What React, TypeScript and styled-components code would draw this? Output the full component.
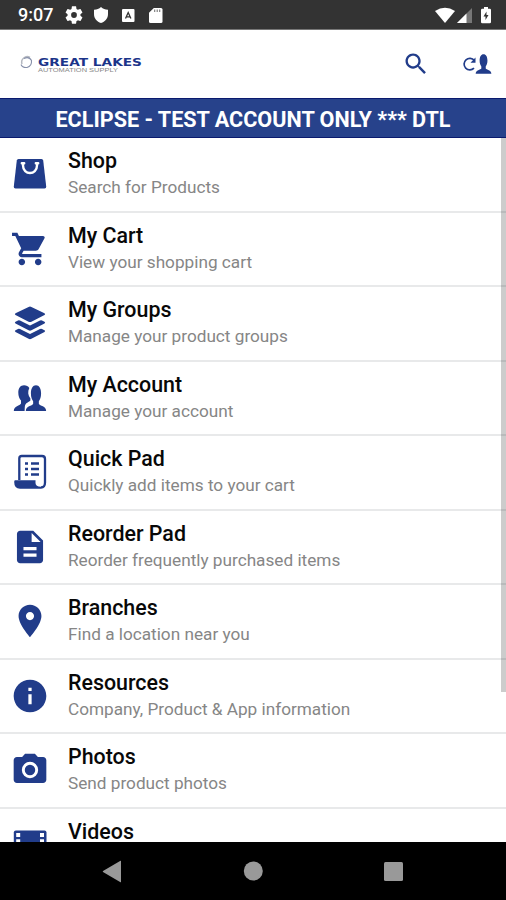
import React from 'react';
import styled, { createGlobalStyle } from 'styled-components';

const navy = '#213c8a';

const GlobalStyle = createGlobalStyle`
  * { box-sizing: border-box; }
  body { margin: 0; background: #fff; font-family: Roboto, "Liberation Sans", sans-serif; }
  svg { display: block; flex: none; }
`;

const Screen = styled.div`
  width: 506px;
  height: 900px;
  display: flex;
  flex-direction: column;
  overflow: hidden;
  background: #fff;
`;

const StatusBar = styled.div`
  height: 30px;
  flex: none;
  display: flex;
  align-items: center;
  justify-content: space-between;
  padding: 1px 15px 0 18px;
  background: #333;
  border-bottom: 1px solid #777;
  color: #fff;
`;

const StatusGroup = styled.div`
  display: flex;
  align-items: center;
`;

const Clock = styled.span`
  width: 47px;
  font-size: 18px;
  line-height: 20px;
  font-weight: 500;
  white-space: nowrap;
`;

const StatusSlot = styled.span<{ $width: number }>`
  width: ${(p) => p.$width}px;
  flex: none;
`;

const Header = styled.header`
  height: 68px;
  flex: none;
  display: flex;
  align-items: center;
  padding: 0 14px 0 19px;
`;

const Actions = styled.div`
  margin-left: auto;
  display: flex;
  align-items: center;
  gap: 32px;
`;

const Banner = styled.div`
  height: 40px;
  flex: none;
  display: flex;
  align-items: center;
  justify-content: center;
  padding-top: 2px;
  background: #27428b;
  border-top: 1px solid #0a1a6e;
  border-bottom: 1px solid #0a1a6e;
  color: #fff;
  font-size: 21.6px;
  font-weight: 700;
  white-space: nowrap;
`;

const ListArea = styled.main`
  position: relative;
  height: 704px;
  flex: none;
  overflow: hidden;
`;

const Row = styled.div`
  height: 74.5px;
  display: flex;
  align-items: center;
  padding-left: 10px;
  border-bottom: 2px solid #e8e9ea;
`;

const IconBox = styled.div`
  width: 58px;
  flex: none;
`;

const RowText = styled.div`
  display: flex;
  flex-direction: column;
  white-space: nowrap;
`;

const Title = styled.span`
  font-size: 21.4px;
  line-height: 26px;
  font-weight: 500;
  color: #080808;
`;

const Subtitle = styled.span`
  font-size: 17.2px;
  line-height: 26px;
  color: #868686;
`;

const ScrollThumb = styled.div`
  position: absolute;
  top: 0;
  right: 0;
  width: 5px;
  height: 554px;
  background: rgba(0, 0, 0, 0.2);
`;

const NavBar = styled.nav`
  height: 58px;
  flex: none;
  display: flex;
  justify-content: center;
  background: #000;
`;

const USER =
  'M17 0C22 0 25 3.500 25 9C25 13 23.500 15.500 21.500 17.500V20.500C23 22.500 33 22.500 33 28H1C1 22.500 11 22.500 12.500 20.500V17.500C10.500 15.500 9 13 9 9C9 3.500 12 0 17 0Z';

const Material = ({ d }: { d: string }) => (
  <svg width="40" height="40" viewBox="-.25 -.25 24.5 24.5" fill={navy}>
    <path fillRule="evenodd" d={d} />
  </svg>
);

const Bag = () => (
  <svg width="40" height="40" viewBox="0 0 40 40">
    <path fill={navy} d="M8.500 5H31.500Q33 5 33.200 6.500L36.200 32.500Q36.400 34.500 34.500 34.500H5.500Q3.600 34.500 3.800 32.500L6.800 6.500Q7 5 8.500 5Z" />
    <path fill="none" stroke="#fff" strokeWidth="2.400" strokeLinecap="round" d="M13 9.200V11.500C13 21.500 27 21.500 27 11.500V9.200M11.800 9.200h2.400M25.800 9.200h2.400" />
  </svg>
);

const Layers = () => (
  <svg width="40" height="40" viewBox="0 0 40 40" fill={navy}>
    <path d="M18.600 3.900Q20 3.100 21.400 3.900L34.500 10.300Q35.800 11.200 34.500 12L21.400 18.700Q20 19.400 18.600 18.700L5.500 12Q4.200 11.200 5.500 10.300Z" />
    <path d="M5.500 18.800L8 17.500Q9 17.100 10 17.600L20 22.500L30 17.600Q31 17.100 32 17.500L34.500 18.800Q35.800 19.600 34.500 20.400L21.400 27.300Q20 28 18.600 27.300L5.500 20.400Q4.200 19.600 5.500 18.800Z" />
    <path d="M5.500 27.300L8 26Q9 25.600 10 26.100L20 31L30 26.100Q31 25.600 32 26L34.500 27.300Q35.800 28.100 34.500 28.900L21.400 35.800Q20 36.500 18.600 35.800L5.500 28.900Q4.200 28.100 5.500 27.300Z" />
  </svg>
);

const People = () => (
  <svg width="40" height="40" viewBox="0 0 40 40" fill={navy}>
    <path d="M14 7.200C16.400 7.200 18.300 8.200 19.300 10C17.500 13.500 18 17.500 20.400 20.500V22.500C19.500 24 15 24.500 14.800 29L14.600 33H3.800C3.800 27.800 10 28 11 25.500V22.500C9.300 20.500 8.300 18 8.300 14.500C8.300 10 10.500 7.200 14 7.200Z" />
    <g transform="translate(15.2 7.200) scale(.635 .92)"><path d={USER} /></g>
  </svg>
);

const Scroll = () => (
  <svg width="40" height="40" viewBox="0 0 40 40">
    <path fill="#fff" stroke={navy} strokeWidth="2.300" d="M9.300 28V6.500Q9.300 4 11.800 4H32Q35 4 35 7V30.500Q35 35.500 31 35.500" />
    <path fill={navy} d="M5 28.200H25.500V31Q25.500 34.700 31 34.700V36.700H10Q4.200 36.700 4.200 30Q4.200 28.200 5 28.200Z" />
    <path stroke={navy} strokeWidth="2.300" d="M15 11.500h3M21 11.500h8M15 17h3M21 17h8M15 22.500h3M21 22.500h8" />
  </svg>
);

const Film = () => (
  <svg width="40" height="40" viewBox="0 0 40 40">
    <rect x="3.800" y="5.500" width="32.700" height="29" rx="2" fill={navy} />
    <path fill="#fff" d="M6.200 8h4v4h-4zM6.200 14.300h4v4h-4zM6.200 20.600h4v4h-4zM6.200 27h4v4h-4zM30 8h4v4h-4zM30 14.300h4v4h-4zM30 20.600h4v4h-4zM30 27h4v4h-4z" />
  </svg>
);

const CART =
  'M7 18c-1.100 0-1.990.9-1.990 2S5.900 22 7 22s2-.9 2-2-.9-2-2-2zM1 2v2h2l3.600 7.590-1.350 2.450c-.16.28-.25.610-.25.960 0 1.100.9 2 2 2h12v-2H7.420c-.14 0-.25-.11-.25-.25l.03-.12.9-1.630h7.450c.75 0 1.410-.41 1.750-1.030l3.580-6.490c.08-.14.120-.31.120-.48 0-.55-.45-1-1-1H5.210l-.94-2H1zm16 16c-1.100 0-1.990.9-1.990 2s.89 2 1.990 2 2-.9 2-2-.9-2-2-2z';
const DOC =
  'M14 2H6c-1.100 0-1.990.9-1.990 2L4 20c0 1.100.89 2 1.990 2H18c1.100 0 2-.9 2-2V8l-6-6zm2 16H8v-2h8v2zm0-4H8v-2h8v2zm-3-5V3.500L18.500 9H13z';
const PIN =
  'M12 2C8.130 2 5 5.130 5 9c0 5.250 7 13 7 13s7-7.750 7-13c0-3.870-3.130-7-7-7zm0 9.500c-1.380 0-2.500-1.120-2.500-2.500s1.120-2.500 2.500-2.500 2.500 1.120 2.500 2.500-1.120 2.500-2.500 2.500z';
const INFO =
  'M12 2C6.480 2 2 6.480 2 12s4.480 10 10 10 10-4.480 10-10S17.520 2 12 2zm1 15h-2v-6h2v6zm0-8h-2V7h2v2z';
const CAMERA =
  'M9 2L7.170 4H4c-1.100 0-2 .9-2 2v12c0 1.100.9 2 2 2h16c1.100 0 2-.9 2-2V6c0-1.100-.9-2-2-2h-3.170L15 2H9zM12 17a5 5 0 1 1 0-10a5 5 0 1 1 0 10zM12 15.200a3.200 3.200 0 1 0 0-6.400a3.200 3.200 0 1 0 0 6.400z';
const SEARCH =
  'M15.500 14h-.79l-.28-.27C15.410 12.590 16 11.110 16 9.500 16 5.910 13.090 3 9.500 3S3 5.910 3 9.500 5.910 16 9.500 16c1.610 0 3.090-.59 4.230-1.570l.27.28v.79l5 4.990L20.490 19l-4.990-5zm-6 0C7.010 14 5 11.990 5 9.500S7.010 5 9.500 5 14 7.010 14 9.500 11.990 14 9.500 14z';
const GEAR =
  'M19.140 12.940c.04-.3.060-.61.060-.94 0-.32-.02-.64-.07-.94l2.030-1.580c.18-.14.230-.41.120-.61l-1.920-3.320c-.12-.22-.37-.29-.59-.22l-2.390.96c-.5-.38-1.030-.7-1.620-.94l-.36-2.540c-.04-.24-.24-.41-.48-.41h-3.840c-.24 0-.43.17-.47.41l-.36 2.540c-.59.24-1.130.57-1.620.94l-2.390-.96c-.22-.08-.47 0-.59.22L2.740 8.870c-.12.210-.08.470.12.610l2.030 1.580c-.05.3-.09.630-.09.940s.02.640.07.940l-2.030 1.580c-.18.140-.23.410-.12.610l1.920 3.320c.12.220.37.290.59.220l2.390-.96c.5.380 1.030.7 1.620.94l.36 2.540c.05.240.24.410.48.410h3.840c.24 0 .44-.17.47-.41l.36-2.540c.59-.24 1.130-.56 1.620-.94l2.390.96c.22.080.47 0 .59-.22l1.920-3.320c.12-.22.070-.47-.12-.61l-2.010-1.580zM12 15.200a3.200 3.200 0 1 1 0-6.400a3.200 3.200 0 1 1 0 6.400z';

const rows = [
  { title: 'Shop', sub: 'Search for Products', icon: <Bag /> },
  { title: 'My Cart', sub: 'View your shopping cart', icon: <Material d={CART} /> },
  { title: 'My Groups', sub: 'Manage your product groups', icon: <Layers /> },
  { title: 'My Account', sub: 'Manage your account', icon: <People /> },
  { title: 'Quick Pad', sub: 'Quickly add items to your cart', icon: <Scroll /> },
  { title: 'Reorder Pad', sub: 'Reorder frequently purchased items', icon: <Material d={DOC} /> },
  { title: 'Branches', sub: 'Find a location near you', icon: <Material d={PIN} /> },
  { title: 'Resources', sub: 'Company, Product & App information', icon: <Material d={INFO} /> },
  { title: 'Photos', sub: 'Send product photos', icon: <Material d={CAMERA} /> },
  { title: 'Videos', sub: 'Watch product videos', icon: <Film /> },
];

const Logo = () => (
  <svg width="125" height="24" viewBox="0 0 125 24">
    <path d="M3 12A5.500 5.500 0 0 1 11 5.500" fill="none" stroke="#b4b8c0" strokeWidth="1.500" />
    <path d="M5 6.500Q10 4 12.500 8.500Q13 14 8 15.500Q3.500 16 2 12.500" fill="none" stroke="#8790aa" strokeWidth="1.100" />
    <text x="19" y="13.700" fontFamily="DejaVu Sans, sans-serif" fontSize="10.400" fontWeight="700" fill="#1b3489" textLength="104" lengthAdjust="spacingAndGlyphs">GREAT LAKES</text>
    <text x="19" y="19.800" fontFamily="Liberation Sans, sans-serif" fontSize="6.200" fill="#858585" textLength="80" lengthAdjust="spacingAndGlyphs">AUTOMATION SUPPLY</text>
  </svg>
);

export default function App() {
  return (
    <Screen>
      <GlobalStyle />
      <StatusBar>
        <StatusGroup>
          <Clock>9:07</Clock>
          <StatusSlot $width={28}>
            <svg width="18" height="18" viewBox="2 2 20 20" fill="#fff"><path d={GEAR} /></svg>
          </StatusSlot>
          <StatusSlot $width={28}>
            <svg width="16" height="18" viewBox="0 0 16 18" fill="#fff"><path d="M8 1C10 2.800 12 3.500 15 3.800V8C15 12.500 12 15.800 8 17C4 15.800 1 12.500 1 8V3.800C4 3.500 6 2.800 8 1Z" /></svg>
          </StatusSlot>
          <StatusSlot $width={28}>
            <svg width="14" height="16" viewBox="0 0 14 16">
              <rect x="1" y="2" width="12.500" height="13" rx="1" fill="#fff" />
              <path d="M4.500 11.500L7.200 5.500L9.900 11.500M5.500 9.800h3.400" fill="none" stroke="#333" strokeWidth="1.300" />
            </svg>
          </StatusSlot>
          <svg width="14" height="17" viewBox="0 0 14 17">
            <path fill="#fff" d="M4.800 1H12Q13.500 1 13.500 2.500V14.500Q13.500 16 12 16H1.500Q0 16 0 14.500V5.800Z" />
            <path stroke="#777" strokeWidth="1.100" d="M5.700 2.500v2.500M8.200 2.500v2.500M10.700 2.500v2.500" />
          </svg>
        </StatusGroup>
        <StatusGroup>
          <StatusSlot $width={22}>
            <svg width="20" height="17" viewBox="0 0 20 17"><path fill="#fff" d="M0 4Q10 -2.500 20 4L10 16Z" /></svg>
          </StatusSlot>
          <StatusSlot $width={24}>
            <svg width="15" height="16" viewBox="0 0 15 16">
              <path fill="#777" d="M15 1V16H0Z" />
              <path fill="#fff" d="M9.500 6.500V16H0Z" />
            </svg>
          </StatusSlot>
          <svg width="10" height="18" viewBox="0 0 10 18">
            <path fill="#fff" d="M3 1h4v1.700h1.800Q10 2.700 10 4V16Q10 17.300 8.700 17.300H1.300Q0 17.300 0 16V4Q0 2.700 1.300 2.700H3Z" />
            <path fill="#333" d="M5.500 5.500V9H7.500L4.500 14V10.500H2.500Z" />
          </svg>
        </StatusGroup>
      </StatusBar>
      <Header>
        <Logo />
        <Actions>
          <svg width="28" height="28" viewBox="0 0 24 24" fill={navy}><path d={SEARCH} /></svg>
          <svg width="30" height="24" viewBox="0 0 30 24">
            <path d="M12 16.200A5.800 5.800 0 1 1 12.300 8.300" fill="none" stroke={navy} strokeWidth="1.700" />
            <path d="M13.500 5.500V10.800H8.500Z" fill={navy} />
            <g transform="translate(13.200 2.200) scale(.49 .7)" fill={navy}><path d={USER} /></g>
          </svg>
        </Actions>
      </Header>
      <Banner>ECLIPSE - TEST ACCOUNT ONLY *** DTL</Banner>
      <ListArea>
        {rows.map((r) => (
          <Row key={r.title}>
            <IconBox>{r.icon}</IconBox>
            <RowText>
              <Title>{r.title}</Title>
              <Subtitle>{r.sub}</Subtitle>
            </RowText>
          </Row>
        ))}
        <ScrollThumb />
      </ListArea>
      <NavBar>
        <svg width="506" height="58" viewBox="0 0 506 58" fill="#999">
          <path d="M121 19V40Q121 40.500 120.500 40.200L103 30Q102.500 29.500 103 29L120.500 18.800Q121 18.500 121 19Z" />
          <circle cx="253.300" cy="29" r="9.500" />
          <rect x="384" y="20" width="19" height="19" rx="1.500" />
        </svg>
      </NavBar>
    </Screen>
  );
}
